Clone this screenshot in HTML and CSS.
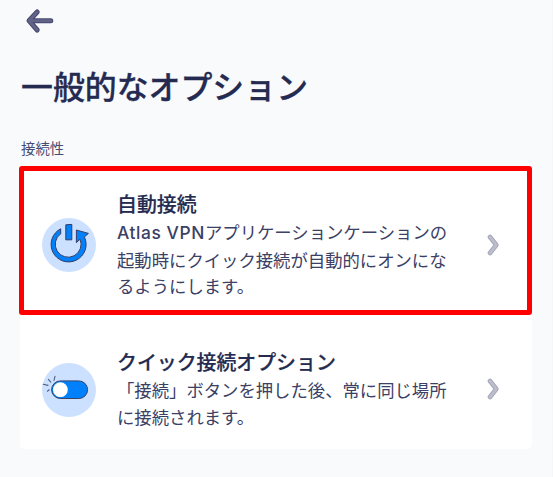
FILE: index.html
```html
<!DOCTYPE html>
<html lang="ja">
<head>
    <meta charset="UTF-8">
    <meta name="viewport" content="width=device-width, initial-scale=1.0">
    <title>一般的なオプション</title>
    <link rel="stylesheet" href="styles.css">
</head>
<body>

<header>
    <a href="#" class="back" aria-label="戻る">
        <svg width="30" height="26" viewBox="0 0 30 26">
            <path class="arrow-edge" d="M12.2 4L4 12.7L12.2 22M5 12.7H25.8"/>
            <path class="arrow-fill" d="M12.2 4L4 12.7L12.2 22M5 12.7H25.8"/>
        </svg>
    </a>
    <h1>一般的なオプション</h1>
</header>

<main>
    <h2 class="section-label">接続性</h2>
    <div class="options">
        <a href="#" class="option highlighted">
            <svg class="option-icon" width="54" height="54" viewBox="0 0 54 54">
                <circle cx="27" cy="27" r="27" fill="#cce0ff"/>
                <path class="power" d="M18.7 10.8V15.8A12.9 12.9 0 1 0 38 21.2L34.4 24.7V12L46.4 15.4L42.4 18.9A17.5 17.5 0 1 1 18.7 10.8Z"/>
                <path class="power" d="M23.8 6.8L29.8 6.4V21.8H23.8Z"/>
            </svg>
            <div class="option-text">
                <h3>自動接続</h3>
                <p><span class="latin">Atlas VPN</span>アプリケーションケーションの<br>起動時にクイック接続が自動的にオンにな<br>るようにします。</p>
            </div>
            <svg class="chevron" width="14" height="24" viewBox="0 0 14 24">
                <path class="chevron-edge" d="M3 4L9.3 12L3 20"/>
                <path class="chevron-fill" d="M3 4L9.3 12L3 20"/>
            </svg>
        </a>
        <a href="#" class="option">
            <svg class="option-icon" width="54" height="54" viewBox="0 0 54 54">
                <circle cx="27" cy="27" r="27" fill="#cce0ff"/>
                <rect x="9.6" y="17.9" width="36" height="17.6" rx="8.8" fill="#0080fa" stroke="#394269" stroke-width="1"/>
                <circle cx="18.4" cy="26.7" r="7.4" fill="#fff"/>
                <path class="spark" d="M1.2 21.2L6 22.4M6.4 16.4L8.8 19.2M13 13.4L12 17.4M5.4 28.2L7.2 26.8"/>
            </svg>
            <div class="option-text">
                <h3>クイック接続オプション</h3>
                <p>「接続」ボタンを押した後、常に同じ場所<br>に接続されます。</p>
            </div>
            <svg class="chevron" width="14" height="24" viewBox="0 0 14 24">
                <path class="chevron-edge" d="M3 4L9.3 12L3 20"/>
                <path class="chevron-fill" d="M3 4L9.3 12L3 20"/>
            </svg>
        </a>
    </div>
</main>

</body>
</html>
```
FILE: styles.css
```css
* {
    box-sizing: border-box;
}

body {
    font-family: 'Noto Sans CJK JP', sans-serif;
    margin: 0;
    padding: 8px 20px 0 19px;
    min-height: 477px;
    background-color: #f9fafc;
    border-right: 1px solid #f5f6f8;
    color: #252b50;
}

.back {
    display: block;
    width: 30px;
    height: 26px;
    margin-left: 6px;
}

.back svg,
.option-icon,
.chevron {
    display: block;
}

.arrow-edge,
.arrow-fill,
.chevron-edge,
.chevron-fill {
    fill: none;
    stroke-linecap: round;
    stroke-linejoin: round;
}

.arrow-edge {
    stroke: #45486d;
    stroke-width: 5;
}

.arrow-fill {
    stroke: #626487;
    stroke-width: 3;
}

h1 {
    margin: 27px 0 0 2px;
    font-size: 31.9px;
    line-height: 48px;
    font-weight: 500;
    -webkit-text-stroke: 0.3px #252b50;
}

.section-label {
    margin: 29px 0 0 2px;
    font-size: 14.4px;
    line-height: 20px;
    font-weight: 400;
    color: #484c70;
}

.options {
    margin-top: 8px;
    background: linear-gradient(to right, transparent 1px, #fff 1px);
    border-radius: 6px;
}

.option {
    display: flex;
    align-items: center;
    height: 134px;
    padding: 0 31px 0 23px;
    color: inherit;
    text-decoration: none;
}

.option.highlighted {
    height: 149px;
    padding: 0 26px 0 18px;
    border: 5px solid #f00;
    border-radius: 3px;
}

.option-icon {
    flex: none;
    margin-top: 15px;
}

.highlighted .option-icon {
    margin-top: 8px;
}

.option-text {
    flex: 1;
    margin: 13px 0 0 21px;
    white-space: nowrap;
}

.highlighted .option-text {
    margin-top: 9px;
}

h3 {
    margin: 0 0 1px;
    font-size: 19.9px;
    line-height: 29px;
    font-weight: 500;
    -webkit-text-stroke: 0.2px #252b50;
}

.highlighted h3 {
    line-height: 28px;
}

p {
    margin: 0;
    font-size: 17.35px;
    line-height: 26.7px;
    color: #3b4065;
}

.latin {
    font-family: Inter, sans-serif;
    font-weight: 500;
    letter-spacing: 0.6px;
}

.chevron {
    flex: none;
    margin-top: 14px;
}

.highlighted .chevron {
    margin-top: 8px;
}

.chevron-edge {
    stroke: #a5a6b8;
    stroke-width: 4.6;
}

.chevron-fill {
    stroke: #bdbecb;
    stroke-width: 2.8;
}

.power {
    fill: #0080fa;
    stroke: #343d68;
    stroke-width: 1;
    stroke-linejoin: round;
}

.spark {
    fill: none;
    stroke: #526083;
    stroke-width: 1.1;
    stroke-linecap: round;
}
```
